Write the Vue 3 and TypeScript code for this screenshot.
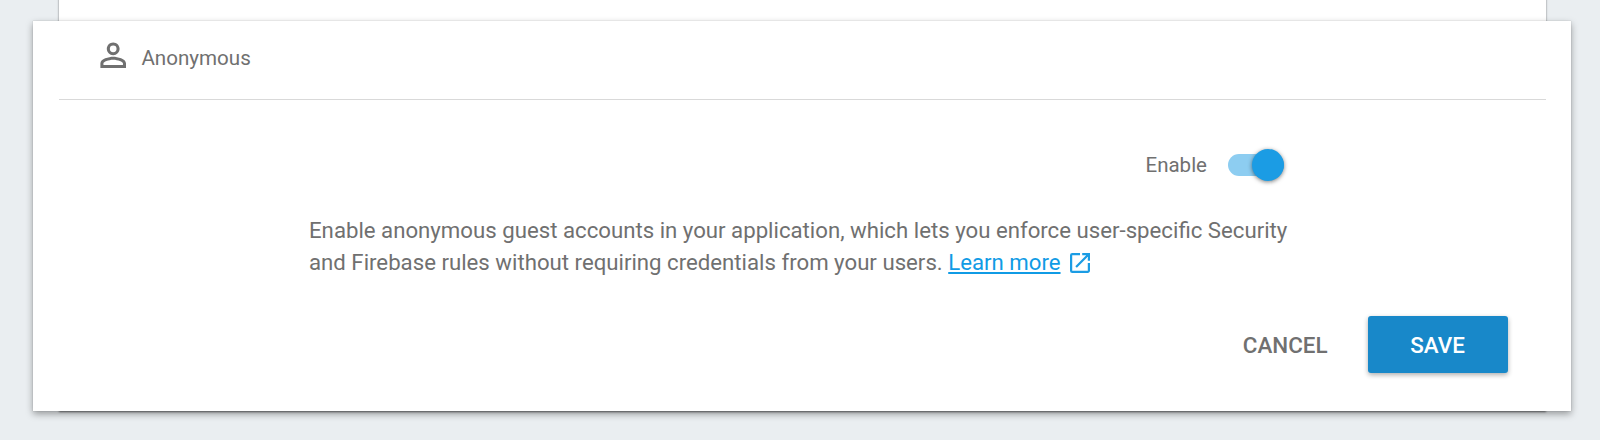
<script setup lang="ts">
import { ref } from 'vue'

const provider = 'Anonymous'
const enabled = ref(true)
</script>

<template>
  <main class="page">
    <div class="backdrop-card"></div>
    <section class="card">
      <header class="card-header">
        <svg class="person" viewBox="0 0 24 24" aria-hidden="true">
          <path
            d="M12 5.9a2.1 2.1 0 1 1 0 4.2 2.1 2.1 0 0 1 0-4.2m0 9c2.97 0 6.1 1.46 6.1 2.1v1.1H5.9V17c0-.64 3.13-2.1 6.1-2.1M12 4C9.79 4 8 5.79 8 8s1.79 4 4 4 4-1.79 4-4-1.79-4-4-4zm0 9c-2.67 0-8 1.34-8 4v3h16v-3c0-2.66-5.33-4-8-4z"
          />
        </svg>
        <span class="provider">{{ provider }}</span>
      </header>
      <div class="content">
        <div class="enable-row">
          <span class="enable-label">Enable</span>
          <button
            class="switch"
            :class="{ on: enabled }"
            role="switch"
            aria-label="Enable"
            :aria-checked="enabled"
            @click="enabled = !enabled"
          >
            <span class="thumb"></span>
          </button>
        </div>
        <p class="description">
          <span class="line first">Enable anonymous guest accounts in your application, which lets you enforce user-specific Security</span>
          <span class="line second">and Firebase rules without requiring credentials from your users. <a class="link" href="#">Learn more</a><svg class="open" viewBox="3 3 18 18" aria-hidden="true"><path d="M19 19H5V5h7V3H5a2 2 0 0 0-2 2v14a2 2 0 0 0 2 2h14c1.1 0 2-.9 2-2v-7h-2v7zM14 3v2h3.59l-9.83 9.83 1.41 1.41L19 6.41V10h2V3h-7z" /></svg></span>
        </p>
      </div>
      <footer class="actions">
        <button class="button cancel">CANCEL</button>
        <button class="button save">SAVE</button>
      </footer>
    </section>
  </main>
</template>

<style>
body {
  background: #eaeef1;
}
</style>

<style scoped>
.page {
  position: relative;
  box-sizing: border-box;
  width: 1600px;
  height: 440px;
  padding: 21px 28px 0 33px;
  overflow: hidden;
  background: #eaeef1;
  color: #707070;
  font-family: Roboto, sans-serif;
}
.backdrop-card {
  position: absolute;
  left: 59px;
  top: -20px;
  width: 1487px;
  height: 431px;
  background: #fff;
  box-shadow: 0 1px 2px rgba(0, 0, 0, 0.5);
}
.card {
  position: relative;
  box-sizing: border-box;
  width: 1538px;
  height: 390px;
  background: #fff;
  box-shadow: 0 0 1px rgba(0, 0, 0, 0.24), 0 3px 7px rgba(0, 0, 0, 0.36);
}
.card-header {
  display: flex;
  align-items: flex-start;
  box-sizing: border-box;
  height: 79px;
  margin: 0 25px 0 26px;
  padding: 15px 0 0 34.5px;
  border-bottom: 1px solid #d9d9d9;
}
.person {
  width: 38.4px;
  height: 38.4px;
  fill: #707070;
}
.provider {
  margin: 9px 0 0 9.5px;
  font-size: 20.6px;
  line-height: 26px;
}
.content {
  margin-left: 276px;
  width: 980px;
}
.enable-row {
  display: flex;
  justify-content: flex-end;
  align-items: center;
  height: 32px;
  padding: 49px 5px 0 0;
}
.enable-label {
  margin-right: 21px;
  font-size: 20.5px;
  line-height: 26px;
}
.switch {
  display: flex;
  align-items: center;
  width: 56px;
  height: 22px;
  padding: 0;
  border: 0;
  border-radius: 11px;
  background: #bdbdbd;
}
.switch.on {
  justify-content: flex-end;
  background: #8dcdf1;
}
.thumb {
  flex: none;
  width: 32px;
  height: 32px;
  border-radius: 50%;
  background: #fafafa;
  box-shadow: 0 1px 4px rgba(0, 0, 0, 0.5);
}
.on .thumb {
  background: #1b9ce4;
}
.description {
  margin: 33px 0 0;
  font-size: 22.21px;
  line-height: 32px;
}
.line {
  display: block;
  white-space: nowrap;
}
.link {
  color: #109be5;
  text-decoration: underline;
}
.open {
  width: 20px;
  height: 20px;
  margin-left: 9px;
  vertical-align: -3px;
  fill: #1b9ce4;
}
.actions {
  display: flex;
  justify-content: flex-end;
  align-items: center;
  padding: 38px 63.5px 0 0;
}
.button {
  height: 57px;
  padding: 0;
  border: 0;
  border-radius: 3px;
  font: 500 22.4px/26px Roboto, sans-serif;
}
.cancel {
  margin-right: 40px;
  background: transparent;
  color: #707070;
}
.save {
  width: 140px;
  background: #1888c9;
  color: #fff;
  box-shadow: 0 2px 5px rgba(0, 0, 0, 0.32);
}
</style>
